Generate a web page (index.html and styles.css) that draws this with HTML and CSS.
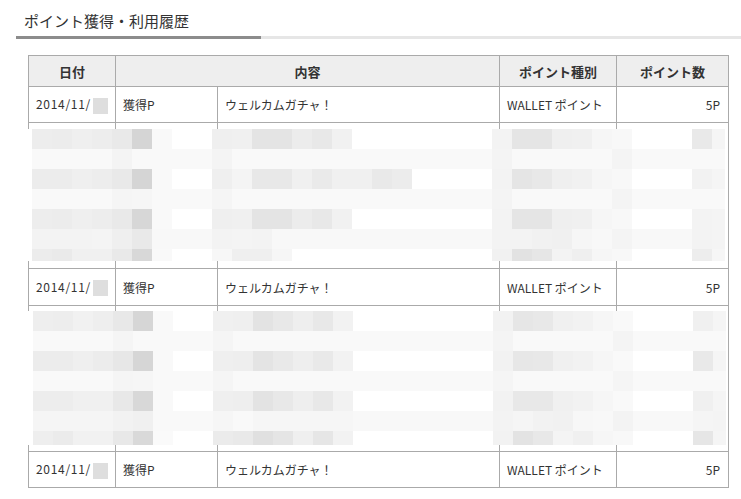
FILE: index.html
```html
<!DOCTYPE html>
<html lang="ja">
<head>
<meta charset="utf-8">
<title>ポイント獲得・利用履歴</title>
<link rel="stylesheet" href="styles.css">
</head>
<body>
<div class="page">
  <div class="heading">
    <h2 class="title">ポイント獲得・利用履歴</h2>
    <div class="rule"><span class="rule-dark"></span><span class="rule-light"></span></div>
  </div>
  <div class="table-wrap">
    <table class="history">
      <colgroup>
        <col class="c-date"><col class="c-kind"><col class="c-desc"><col class="c-type"><col class="c-num">
      </colgroup>
      <thead>
        <tr><th>日付</th><th colspan="2">内容</th><th>ポイント種別</th><th>ポイント数</th></tr>
      </thead>
      <tbody>
        <tr><td class="date">2014/11/<span class="blank"></span></td><td>獲得P</td><td>ウェルカムガチャ！</td><td>WALLET ポイント</td><td class="num">5P</td></tr>
        <tr><td class="date">2014/11/<span class="blank"></span></td><td>獲得P</td><td>ウェルカムガチャ！</td><td>WALLET ポイント</td><td class="num">5P</td></tr>
        <tr><td class="date">2014/11/<span class="blank"></span></td><td>獲得P</td><td>ウェルカムガチャ！</td><td>WALLET ポイント</td><td class="num">5P</td></tr>
        <tr><td class="date">2014/11/<span class="blank"></span></td><td>獲得P</td><td>ウェルカムガチャ！</td><td>WALLET ポイント</td><td class="num">5P</td></tr>
        <tr><td class="date">2014/11/<span class="blank"></span></td><td>獲得P</td><td>ウェルカムガチャ！</td><td>WALLET ポイント</td><td class="num">5P</td></tr>
        <tr><td class="date">2014/11/<span class="blank"></span></td><td>獲得P</td><td>ウェルカムガチャ！</td><td>WALLET ポイント</td><td class="num">5P</td></tr>
        <tr><td class="date">2014/11/<span class="blank"></span></td><td>獲得P</td><td>ウェルカムガチャ！</td><td>WALLET ポイント</td><td class="num">5P</td></tr>
        <tr><td class="date">2014/11/<span class="blank"></span></td><td>獲得P</td><td>ウェルカムガチャ！</td><td>WALLET ポイント</td><td class="num">5P</td></tr>
        <tr><td class="date">2014/11/<span class="blank"></span></td><td>獲得P</td><td>ウェルカムガチャ！</td><td>WALLET ポイント</td><td class="num">5P</td></tr>
        <tr><td class="date">2014/11/<span class="blank"></span></td><td>獲得P</td><td>ウェルカムガチャ！</td><td>WALLET ポイント</td><td class="num">5P</td></tr>
        <tr><td class="date">2014/11/<span class="blank"></span></td><td>獲得P</td><td>ウェルカムガチャ！</td><td>WALLET ポイント</td><td class="num">5P</td></tr>
      </tbody>
    </table>
    <div class="mosaic mosaic-1"><div class="mosaic-grid" data-set="0"></div></div>
    <div class="mosaic mosaic-2"><div class="mosaic-grid" data-set="1"></div></div>
  </div>
</div>
<script src="script.js"></script>
</body>
</html>
```
FILE: styles.css
```css
* { box-sizing: border-box; }
body {
  margin: 0;
  background: #fff;
  color: #333;
  font-family: "Noto Sans CJK JP", "Liberation Sans", sans-serif;
}
.page { padding-left: 16px; }
.title {
  margin: 0;
  padding: 11px 0 5px 8px;
  font-size: 15px;
  line-height: 20px;
  font-weight: normal;
  color: #333;
}
.rule { display: flex; height: 3px; }
.rule-dark { width: 245px; background: #8c8c8c; }
.rule-light { flex: 1; background: #e6e6e6; }

.table-wrap {
  position: relative;
  margin: 16px 0 0 12px;
  width: 700px;
}
.history {
  border-collapse: collapse;
  table-layout: fixed;
  width: 700px;
  font-size: 12px;
  color: #333;
}
.c-date { width: 87px; }
.c-kind { width: 102px; }
.c-desc { width: 282px; }
.c-type { width: 117px; }
.c-num { width: 112px; }
.history th, .history td {
  border: 1px solid #aaa;
  padding: 0 7px;
  white-space: nowrap;
}
.history th {
  background: #eee;
  font-weight: bold;
  font-size: 13px;
  text-align: center;
  color: #333;
}
.history thead tr { height: 31px; }
.history tbody tr { height: 36px; }
.history tbody tr:nth-child(even) { height: 37px; }
.history td.num { text-align: right; padding-right: 8px; }
.history td.date { letter-spacing: 0.7px; }
.blank {
  display: inline-block;
  width: 15px;
  height: 16px;
  background: #dedede;
  vertical-align: middle;
  margin-left: 2px;
}

.mosaic {
  position: absolute;
  left: 0;
  width: 700px;
  background: #fff;
  overflow: hidden;
}
.mosaic-1 { top: 74px; height: 132px; padding-left: 4px; }
.mosaic-2 { top: 256px; height: 134px; padding-left: 5px; }
.mosaic-grid {
  width: 693px;
  height: 100%;
  overflow: hidden;
  display: grid;
  grid-template-columns: repeat(35, 20px);
  grid-auto-rows: 20px;
}
.mosaic-grid div { width: 20px; height: 20px; }
```
FILE: script.js
```js
var SETS = [
  [
    "ed ec ef ed e9 d5 f9 ffx2 ef f0 e4 e4 ec e8 f1 ffx7 f3 e5 e5 ef f0 f6 f8 ffx3 e9 f5",
    "f9x4 f4 f9x4 f4 f9x13 f4 f9x5 f4 f9x5",
    "ec ec ef ed e9 d5 f9 ffx2 ef f4 e8 e8 f0 ea f0 f0 e9 ec ffx4 f3 e5 e8 ef f1 f6 f8 ffx3 f2 f5",
    "f9x4 f5 f6 f9x3 f5 f9x13 f4 f9x5 f4 f9x5",
    "ed ec ef ed e9 d7 f9 ffx2 ef f0 e4 e4 ec e8 f1 ffx7 f3 e5 e5 ef f0 f6 f8 ffx3 f3 f4",
    "f3 f3 f3 f4 ef e9 f8x3 f3 f4 f3 f8x11 f3 f3 f1 f0 f6 f8 f4 f8x3 f3 f4",
    "ec ea f0 f0 e9 d8 f9 ffx2 f7 ef ef f6 ffx10 f1 e2 e6 f3 ef f6 f8 ffx3 ed f6"
  ],
  [
    "ee ed f1 ee e8 d6 f9 ffx2 f0 ef e3 e8 ee e8 f2 ffx7 f2 e6 e8 f0 f2 f6 f9 ffx3 f0 f5",
    "f9x4 f5 f9x4 f5 f9x13 f4 f9x5 f4 f9x5",
    "ec ec ef ec e7 d6 f9 ffx2 ef ee e4 e9 ee e9 f2 ffx7 f2 e7 e8 f0 f2 f6 f9 ffx3 e9 f5",
    "f9x4 f5 f6 f9x3 f5 f9x13 f5 f9x5 f5 f9x5",
    "ed ed f0 f0 e8 d8 f9 ffx2 ef ee e3 e8 ee e8 f2 ffx7 f2 e8 e8 f0 f2 f6 f9 ffx3 f0 f5",
    "f5x4 f2 f0 f9x3 f6 f9 f6x5 f8x7 f3 f5 f2 f1 f7 f8 f3 f8x3 f5 f4",
    "ee eb f1 f1 e8 d9 fa ffx2 eb e9 e0 e5 ef e6 f2 ffx7 f2 e3 e8 f4 f0 f6 f8 ffx3 e6 f5"
  ]
];

function expand(row) {
  var out = [];
  row.split(" ").forEach(function (tok) {
    var parts = tok.split("x");
    var n = parts.length > 1 ? parseInt(parts[1], 10) : 1;
    for (var i = 0; i < n; i++) out.push(parts[0]);
  });
  while (out.length < 35) out.push("ff");
  return out.slice(0, 35);
}

document.querySelectorAll(".mosaic-grid").forEach(function (grid) {
  var set = SETS[parseInt(grid.getAttribute("data-set"), 10)];
  set.forEach(function (row) {
    expand(row).forEach(function (h) {
      var cell = document.createElement("div");
      cell.style.background = "#" + h + h + h;
      grid.appendChild(cell);
    });
  });
});
```
